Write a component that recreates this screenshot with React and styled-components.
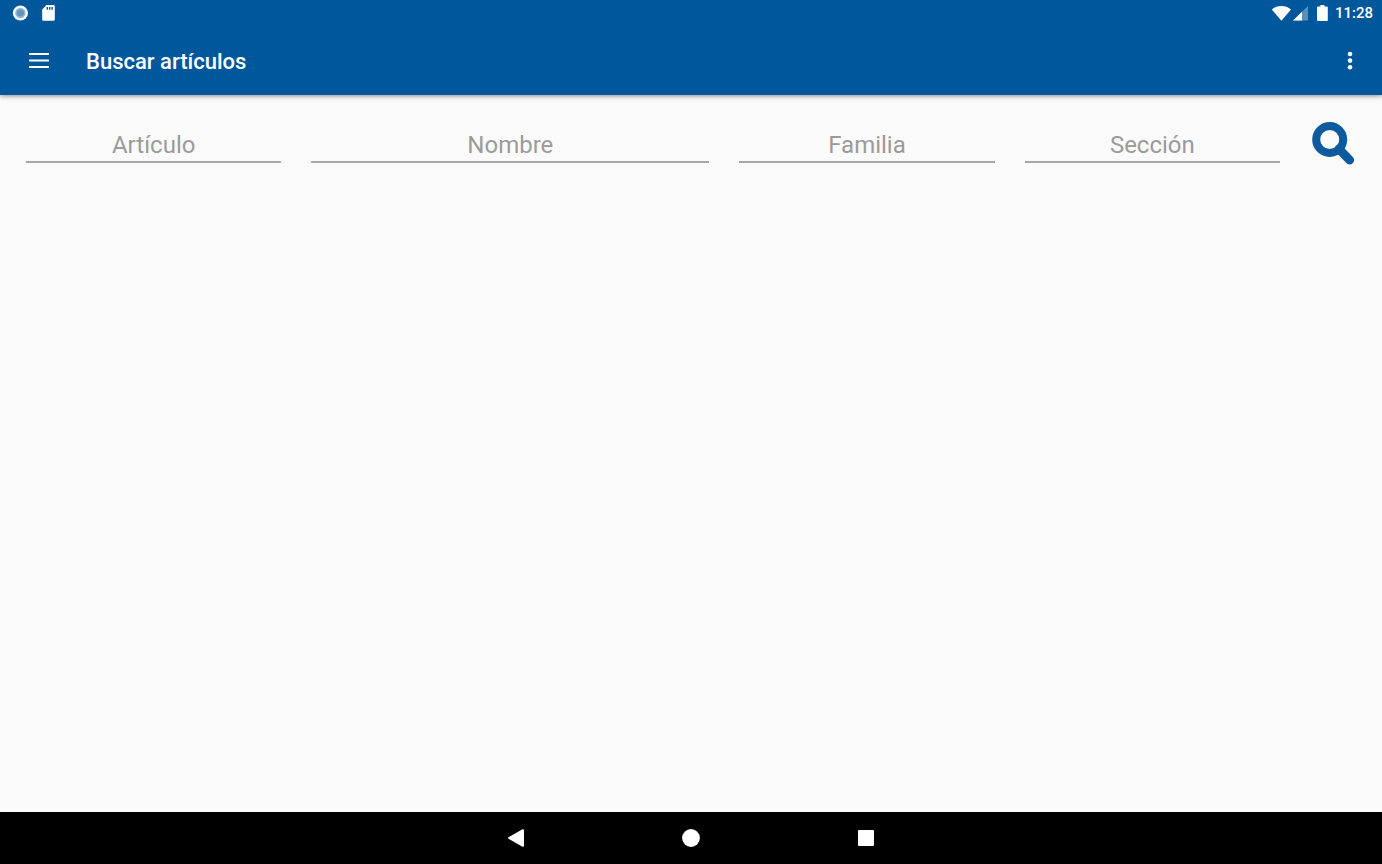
import React, { useState } from 'react';
import styled, { createGlobalStyle } from 'styled-components';

const GlobalStyle = createGlobalStyle`
	* {
		box-sizing: border-box;
	}

	body {
		margin: 0;
		background: #fafafa;
		font-family: Roboto, 'Liberation Sans', sans-serif;
	}
`;

const Screen = styled.div`
	display: flex;
	flex-direction: column;
	min-height: 100vh;
`;

const StatusBar = styled.div`
	position: relative;
	z-index: 1;
	display: flex;
	align-items: center;
	justify-content: space-between;
	height: 26px;
	padding: 0 9px 0 12px;
	background: #01579b;
	color: #fff;
`;

const StatusGroup = styled.div`
	display: flex;
	align-items: center;
	gap: ${(props) => props.$gap}px;
`;

const Clock = styled.span`
	font-size: 15px;
	font-weight: 500;
	line-height: 28px;
`;

const BatterySlot = styled.span`
	display: flex;
	padding: 0 5px 0 7px;
`;

const Toolbar = styled.header`
	display: flex;
	align-items: center;
	height: 69px;
	padding: 0 12px 2px 19px;
	background: #01579b;
	color: #fff;
	box-shadow: 0 1px 5px rgba(0, 0, 0, 0.45);
`;

const Title = styled.h1`
	flex: 1;
	margin: 0 0 0 27px;
	padding-top: 4px;
	font-size: 22px;
	font-weight: 500;
	line-height: 28px;
`;

const IconButton = styled.button`
	display: flex;
	align-items: center;
	justify-content: center;
	width: 40px;
	height: 40px;
	padding: 0;
	border: 0;
	background: none;
	color: inherit;
	cursor: pointer;
`;

const SearchForm = styled.form`
	display: flex;
	align-items: flex-start;
	padding: 24px 11px;
`;

const Fields = styled.div`
	display: grid;
	flex: 1;
	grid-template-columns: 2fr 3fr 2fr 2fr;
`;

const Field = styled.label`
	display: block;
	min-width: 0;
	padding: 8px 15px 0;
`;

const FieldInput = styled.input`
	display: block;
	width: 100%;
	height: 36px;
	padding: 2px 0 0;
	border: 0;
	border-bottom: 2px solid #a6a6a6;
	border-radius: 0;
	outline: none;
	background: transparent;
	color: #212121;
	font-family: inherit;
	font-size: 24px;
	line-height: 32px;
	text-align: center;

	&::placeholder {
		color: #9b9b9b;
		opacity: 1;
	}

	&:focus {
		border-color: #01579b;
	}
`;

const SearchButton = styled(IconButton)`
	width: 76px;
	height: 48px;
	color: #0d5a9e;
`;

const Results = styled.main`
	flex: 1;
`;

const NavBar = styled.nav`
	display: flex;
	justify-content: center;
	height: 52px;
	background: #000;
	color: #fff;
`;

const NavButton = styled(IconButton)`
	width: 175px;
	height: 52px;
`;

const RecordIcon = () => (
	<svg width="16" height="16" viewBox="0 0 16 16" aria-hidden="true">
		<circle cx="8.4" cy="8" r="7.6" fill="#fff" />
		<circle cx="8.4" cy="8" r="5.2" fill="#8dbbe0" />
		<circle cx="8.4" cy="8" r="3.6" fill="#6b93b0" />
	</svg>
);

const SdCardIcon = () => (
	<svg width="13" height="16" viewBox="0 0 13 16" aria-hidden="true">
		<path
			fill="#fff"
			d="M4.6 0H11.5A1.3 1.3 0 0 1 12.8 1.3V14.5A1.3 1.3 0 0 1 11.5 15.8H1.5A1.3 1.3 0 0 1 .2 14.5V4.6Z"
		/>
		<path fill="#01579b" d="M4.6 2H6V4.8H4.6ZM7 2H8.4V4.8H7ZM9.4 2H10.8V4.8H9.4Z" />
	</svg>
);

const WifiIcon = () => (
	<svg width="20" height="16" viewBox="0 0 20 16" aria-hidden="true">
		<path fill="#fff" d="M.8 4.4C6-.1 14.6-.1 20 4.4L10.4 15.8Z" />
	</svg>
);

const SignalIcon = () => (
	<svg width="15" height="16" viewBox="0 0 15 16" aria-hidden="true">
		<path fill="#fff" fillOpacity="0.35" d="M0 15.6 15 1V15.6Z" />
		<path fill="#fff" d="M0 15.6 9 6.8V15.6Z" />
	</svg>
);

const BatteryIcon = () => (
	<svg width="11" height="16" viewBox="0 0 11 16" aria-hidden="true">
		<path
			fill="#fff"
			d="M3.4 0H7.4V1.6H10Q10.8 1.6 10.8 2.5V15Q10.8 16 10 16H.9Q0 16 0 15V2.5Q0 1.6.9 1.6H3.4Z"
		/>
	</svg>
);

const MenuIcon = () => (
	<svg width="20" height="16" viewBox="0 0 20 16" aria-hidden="true">
		<path fill="currentColor" d="M0 1H20V3H0ZM0 7.5H20V9.5H0ZM0 14H20V16H0Z" />
	</svg>
);

const MoreIcon = () => (
	<svg width="6" height="20" viewBox="0 0 6 20" aria-hidden="true">
		<g fill="currentColor">
			<circle cx="3" cy="4" r="2.3" />
			<circle cx="3" cy="10.6" r="2.3" />
			<circle cx="3" cy="17.2" r="2.3" />
		</g>
	</svg>
);

const SearchIcon = () => (
	<svg width="44" height="44" viewBox="0 0 44 44" aria-hidden="true">
		<g fill="none" stroke="currentColor">
			<circle cx="18.7" cy="18.5" r="13.5" strokeWidth="8" />
			<path d="M28 28 38.6 39" strokeWidth="9" strokeLinecap="round" />
		</g>
	</svg>
);

const BackIcon = () => (
	<svg width="16" height="18" viewBox="0 0 16 18" aria-hidden="true">
		<path
			fill="currentColor"
			d="M.5 8.2 14.5.3Q16 0 16 1.2V16.8Q16 18 14.5 17.7L.5 9.8Q-.4 9 .5 8.2Z"
		/>
	</svg>
);

const HomeIcon = () => (
	<svg width="18" height="18" viewBox="0 0 18 18" aria-hidden="true">
		<circle cx="9" cy="9" r="8.9" fill="currentColor" />
	</svg>
);

const RecentIcon = () => (
	<svg width="16" height="16" viewBox="0 0 16 16" aria-hidden="true">
		<rect width="16" height="16" rx="1" fill="currentColor" />
	</svg>
);

const fields = [
	{ name: 'articulo', label: 'Artículo' },
	{ name: 'nombre', label: 'Nombre' },
	{ name: 'familia', label: 'Familia' },
	{ name: 'seccion', label: 'Sección' },
];

const App = () => {
	const [filters, setFilters] = useState({
		articulo: '',
		nombre: '',
		familia: '',
		seccion: '',
	});

	const onChange = (e) =>
		setFilters({ ...filters, [e.target.name]: e.target.value });

	const onSubmit = (e) => {
		e.preventDefault();
	};

	return (
		<Screen>
			<GlobalStyle />
			<StatusBar>
				<StatusGroup $gap={14}>
					<RecordIcon />
					<SdCardIcon />
				</StatusGroup>
				<StatusGroup $gap={2}>
					<WifiIcon />
					<SignalIcon />
					<BatterySlot>
						<BatteryIcon />
					</BatterySlot>
					<Clock>11:28</Clock>
				</StatusGroup>
			</StatusBar>

			<Toolbar>
				<IconButton type="button" aria-label="Menú">
					<MenuIcon />
				</IconButton>
				<Title>Buscar artículos</Title>
				<IconButton type="button" aria-label="Más opciones">
					<MoreIcon />
				</IconButton>
			</Toolbar>

			<SearchForm onSubmit={onSubmit}>
				<Fields>
					{fields.map(({ name, label }) => (
						<Field key={name} htmlFor={name}>
							<FieldInput
								id={name}
								name={name}
								type="text"
								aria-label={label}
								placeholder={label}
								value={filters[name]}
								onChange={onChange}
							/>
						</Field>
					))}
				</Fields>
				<SearchButton type="submit" aria-label="Buscar">
					<SearchIcon />
				</SearchButton>
			</SearchForm>

			<Results />

			<NavBar>
				<NavButton type="button" aria-label="Atrás">
					<BackIcon />
				</NavButton>
				<NavButton type="button" aria-label="Inicio">
					<HomeIcon />
				</NavButton>
				<NavButton type="button" aria-label="Recientes">
					<RecentIcon />
				</NavButton>
			</NavBar>
		</Screen>
	);
};

export default App;
